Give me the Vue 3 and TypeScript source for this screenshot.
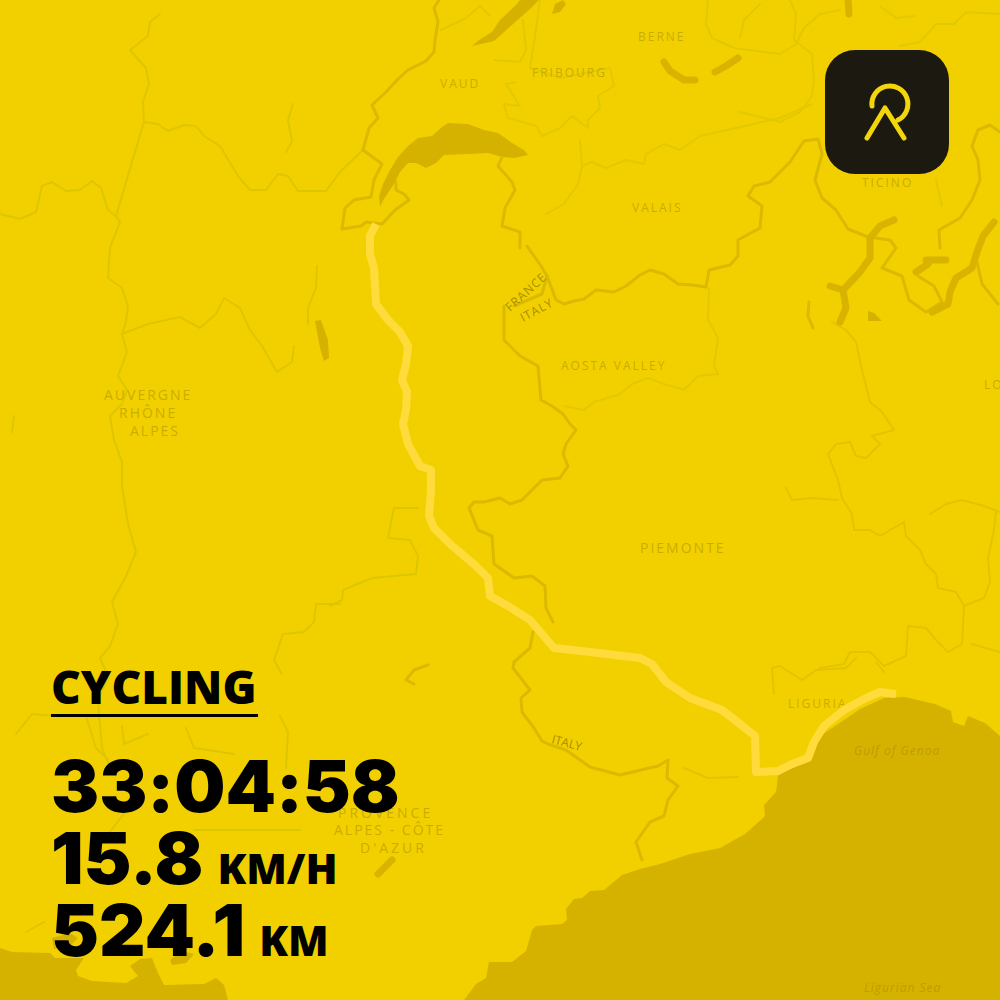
<script setup lang="ts">
interface PlaceLabel {
  text: string
  x: number
  y: number
  spacing: number
  size: number
  rotate?: number
  kind?: 'frontier' | 'sea'
}

interface Stat {
  name: string
  value: string
  unit?: string
}

const activity = 'Cycling'

const stats: Stat[] = [
  { name: 'Duration', value: '33:04:58' },
  { name: 'Average speed', value: '15.8', unit: 'km/h' },
  { name: 'Distance', value: '524.1', unit: 'km' },
]

const labels: PlaceLabel[] = [
  { text: 'BERNE', x: 638, y: 41, spacing: 2, size: 12 },
  { text: 'VAUD', x: 440, y: 88, spacing: 2, size: 12 },
  { text: 'FRIBOURG', x: 532, y: 77, spacing: 2, size: 12 },
  { text: 'VALAIS', x: 632, y: 212, spacing: 2, size: 12 },
  { text: 'TICINO', x: 862, y: 187, spacing: 2, size: 12 },
  { text: 'AOSTA VALLEY', x: 561, y: 370, spacing: 2, size: 12 },
  { text: 'AUVERGNE', x: 104, y: 400, spacing: 2, size: 14 },
  { text: 'RHÔNE', x: 119, y: 418, spacing: 2, size: 14 },
  { text: 'ALPES', x: 130, y: 436, spacing: 2, size: 14 },
  { text: 'PIEMONTE', x: 640, y: 553, spacing: 2, size: 14 },
  { text: 'LO', x: 984, y: 389, spacing: 2, size: 12 },
  { text: 'LIGURIA', x: 788, y: 708, spacing: 2, size: 12 },
  { text: 'PROVENCE', x: 338, y: 818, spacing: 3, size: 14 },
  { text: 'ALPES - CÔTE', x: 334, y: 835, spacing: 2, size: 14 },
  { text: "D'AZUR", x: 360, y: 853, spacing: 3, size: 14 },
  { text: 'FRANCE', x: 510, y: 312, spacing: 1, size: 12, rotate: -42, kind: 'frontier' },
  { text: 'ITALY', x: 523, y: 322, spacing: 1, size: 12, rotate: -28, kind: 'frontier' },
  { text: 'ITALY', x: 551, y: 743, spacing: 0, size: 12, rotate: 15, kind: 'frontier' },
  { text: 'Gulf of Genoa', x: 854, y: 755, spacing: 1, size: 12, kind: 'sea' },
  { text: 'Ligurian Sea', x: 864, y: 992, spacing: 1, size: 12, kind: 'sea' },
]

const water: string[] = [
  // Ligurian Sea
  'M486 1000 L464 1000 L476 984 L486 978 L489 962 L512 962 L526 951 L532 930 L536 926 L562 924 L567 920 L566 909 L574 899 L582 898 L590 891 L604 890 L622 875 L640 869 L660 864 L690 854 L720 848 L745 834 L765 816 L764 805 L776 792 L778 776 L788 770 L812 759 L820 736 L838 724 L860 709 L884 698 L905 697 L935 704 L951 711 L953 722 L964 726 L968 716 L985 723 L1000 736 L1000 1000 Z',
  // Gulf of Lion
  'M0 948 L12 952 L50 953 L55 958 L84 958 L76 970 L78 976 L92 981 L126 983 L138 976 L130 966 L140 959 L152 958 L158 973 L164 985 L204 984 L216 978 L224 985 L228 1000 L0 1000 Z',
  // Lake Geneva
  'M380 207 L379 196 L383 184 L390 170 L398 157 L408 146 L418 138 L432 136 L442 127 L448 123 L468 124 L484 130 L498 133 L512 143 L524 150 L528 155 L514 158 L502 157 L488 153 L470 154 L444 155 L436 163 L426 168 L416 163 L408 163 L400 172 L394 184 L384 199 Z',
  // Lake Neuchatel
  'M472 46 L479 40 L492 32 L500 20 L516 5 L520 0 L539 0 L530 9 L512 25 L494 41 Z',
  'M552 14 L555 4 L563 0 L566 4 L560 12 Z',
  'M52 938 L70 933 L78 938 L70 946 L54 949 Z',
  'M170 960 L182 951 L194 954 L186 963 L172 965 Z',
  'M315 321 L321 320 L328 340 L329 358 L324 361 L320 348 Z',
  'M868 311 L874 313 L882 321 L868 321 Z',
]

const lakes: string[] = [
  'M664 62 L670 71 L684 80 L695 80',
  'M715 72 L726 66 L738 58',
  'M894 220 L880 226 L870 238 L870 258 L860 272 L843 290 L830 286 M843 290 L846 308 L840 322',
  'M994 222 L983 236 L977 252 L972 268 L956 278 L950 292 L948 304 L932 312',
  'M848 0 L849 14',
  'M926 260 L946 260 M928 264 L916 272',
  'M392 860 L378 874',
]

const borders: string[] = [
  // France - Switzerland
  'M439 0 L434 8 L438 22 L435 40 L434 52 L426 61 L408 70 L398 79 L386 92 L372 105 L378 118 L369 128 L363 150 L382 164 L374 180 L371 197 L354 200 L345 208 L342 229 L361 226 L366 222 L382 224 L395 210 L409 200 L404 194 L396 190 L396 182',
  'M502 157 L498 166 L512 182 L515 190 L505 208 L502 226 L520 232 L520 248 M527 246 L541 266 L547 276 L542 294 L514 306',
  // Italy - Switzerland
  'M547 276 L556 300 L564 304 L574 301 L584 299 L596 290 L614 292 L626 286 L640 275 L650 270 L664 274 L678 284 L692 285 L706 287 L709 270 L730 265 L738 256 L738 240 L760 228 L762 206 L748 196 L754 186 L770 182 L790 162 L804 141 L818 139 L822 154 L815 180 L822 198 L836 210 L848 229 L868 237',
  'M868 237 L890 240 L896 248 L882 268 L902 276 L909 300 L926 312 L942 302 L934 286 L918 276 M940 248 L939 230 L960 218 L972 200 L980 180 L978 160 L972 146 L978 130 L990 125 L1000 132',
  // France - Italy
  'M504 306 L504 340 L520 356 L538 366 L541 400 L552 406 L563 414 L570 424 L576 430 L566 444 L563 454 L568 466 L560 478 L542 480 L532 490 L522 500 L510 504 L500 498 L484 502 L474 502 L469 508 L478 530 L492 536 L494 564 L514 578 L532 576 L545 586 L546 608 L553 622',
  'M533 632 L530 648 L514 662 L513 668 L530 690 L521 698 L522 712 L534 728 L542 741 L548 744 L566 750 L590 767 L620 775 L658 766 L668 760 L667 778 L678 786 L668 800 L664 816 L650 822 L636 842 L642 860',
  'M428 665 L414 670 L406 680 L414 684',
  'M977 262 L982 284 L998 304 M809 302 L808 316 L813 328',
]

const regions: string[] = [
  // Rhone and Saone departments
  'M160 14 L150 22 L148 36 L130 50 L146 68 L149 84 L143 102 L144 122 L132 162 L116 216 L120 222 L110 248 L108 278 L122 288 L128 306 L126 322 L122 334 L127 352 L118 376 L127 390 L122 404 L110 416 L114 440 L122 462 L122 486 L128 524 L136 552 L126 576 L112 602 L118 624 L110 646 L100 658 L108 676 L98 700 L102 748 L112 772',
  'M144 122 L158 124 L168 131 L184 125 L196 126 L204 136 L220 146 L238 176 L250 190 L266 190 L278 174 L288 176 L298 191 L326 191 L340 172 L363 150',
  'M293 104 L288 120 L292 142 L286 152 M317 266 L316 288 L308 308 L308 324',
  'M0 214 L20 219 L36 212 L42 186 L52 182 L66 191 L80 190 L92 181 L101 188 L108 210 L118 218',
  'M122 334 L148 324 L180 317 L200 328 L216 314 L224 298 L240 308 L250 330 L262 346 L277 372 L292 362 L294 346',
  'M340 604 L316 604 L314 622 L304 632 L283 634 L274 660 L282 674 M330 606 L342 600 L343 590 L372 578 L416 574 L418 556 L410 540 L388 538 L394 508 L418 508',
  'M16 734 L32 714 L54 716 M86 716 L96 748 L108 760 M122 726 L124 744 L148 734 M186 728 L194 748 L234 754 M280 716 L288 732 L286 768 M108 834 L124 814 L140 800 M194 830 L300 830 M26 932 L44 922',
  'M12 432 L14 416',
]

const cantons: string[] = [
  'M441 30 L466 18 L480 6 L490 16 M523 20 L526 50 L520 62 L494 60 M540 0 L536 30 L530 68 L560 78 L610 68 L614 86 L598 96 L600 108 L588 120 L588 128 L572 116 L560 128 L542 136 L536 126 L508 118 L504 104 L520 106 L506 84 L516 82',
  'M580 140 L582 166 L592 162 L606 168 L626 160 L644 164 L646 154 L664 144 L680 150 L700 136 L718 132 L780 118 L812 104 M582 166 L578 184 L564 204 L546 214',
  'M708 0 L706 24 L712 38 L734 48 L780 54 L796 44 L804 28 L820 14 L840 10 M760 4 L744 20 L740 38 M790 0 L796 14 L794 40 L812 54 L814 80 L812 96 L800 112 L780 122 L740 112',
  'M900 46 L920 42 L936 24 L954 24 L966 12 L1000 14 M880 6 L896 18 L914 16 M936 180 L942 206',
  'M709 288 L708 320 L718 338 L714 366 L718 374 L698 376 L684 390 L664 384 L648 378 L632 384 L620 394 L594 402 L584 410 L564 406',
]

const provinces: string[] = [
  'M832 322 L846 330 L856 342 L862 370 L870 402 L882 412 L894 430 L872 436 L880 444 L866 458 L856 456 L850 442 L836 444 L828 454 L838 480 L842 498 L852 514 L854 530 L870 530 L880 536 L904 522 L906 536 L920 550 L926 564 L936 574 L938 588 L956 592 L964 606 L984 598 L990 582 L988 558 L994 530 L996 512',
  'M786 488 L792 500 L812 498 L838 500 M930 514 L946 504 L962 500 L984 506 L1000 512 M964 606 L962 644 L948 652 L936 640 L926 628 L908 626 L906 656 L884 666 L870 652 L850 652 L844 664 L820 668',
  'M774 694 L772 668 L780 666 L802 680 L816 670 L846 668 L856 658 M684 768 L708 778 L738 777 M876 662 L884 672 M972 644 L1000 652',
]

const route =
  'M376 224 L370 236 L370 254 L374 268 L376 304 L388 320 L400 332 L408 346 L406 364 L402 380 L407 392 L406 410 L403 424 L408 444 L420 466 L431 470 L431 490 L429 516 L434 528 L450 544 L476 566 L488 578 L490 596 L508 606 L530 620 L542 634 L554 648 L590 652 L640 658 L652 664 L666 682 L690 698 L722 710 L740 724 L755 736 L756 772 L778 771 L792 764 L808 758 L814 742 L824 726 L844 710 L866 698 L880 692 L896 694'
</script>

<template>
  <main class="card">
    <svg class="map" viewBox="0 0 1000 1000" preserveAspectRatio="xMidYMid slice" aria-hidden="true">
      <g class="water"><path v-for="d in water" :key="d" :d="d" /></g>
      <g class="line province"><path v-for="d in provinces" :key="d" :d="d" /></g>
      <g class="line canton"><path v-for="d in cantons" :key="d" :d="d" /></g>
      <g class="line region"><path v-for="d in regions" :key="d" :d="d" /></g>
      <g class="line border"><path v-for="d in borders" :key="d" :d="d" /></g>
      <g class="line lake"><path v-for="d in lakes" :key="d" :d="d" /></g>
      <text
        v-for="label in labels"
        :key="label.text + label.y"
        class="place"
        :class="label.kind"
        :font-size="label.size"
        :letter-spacing="label.spacing"
        :transform="`translate(${label.x} ${label.y}) rotate(${label.rotate ?? 0})`"
      >{{ label.text }}</text>
      <path class="route" :d="route" />
    </svg>

    <div class="badge" role="img" aria-label="App logo">
      <svg viewBox="0 0 124 124" aria-hidden="true">
        <path d="M47 56 A18 18 0 1 1 73 70 M42 88 L60 58 L79 88" />
      </svg>
    </div>

    <section class="summary">
      <h1 class="activity">{{ activity }}</h1>
      <ul class="stats">
        <li v-for="stat in stats" :key="stat.name">
          <span class="value">{{ stat.value }}</span>
          <span v-if="stat.unit" class="unit">{{ stat.unit }}</span>
        </li>
      </ul>
    </section>
  </main>
</template>

<style>
body {
  margin: 0;
  background: #f2d000;
}
</style>

<style scoped>
.card {
  position: relative;
  box-sizing: border-box;
  min-height: 100vh;
  padding: 50px 51px 34px;
  display: flex;
  flex-direction: column;
  justify-content: space-between;
  overflow: hidden;
  background: #f2d000;
  color: #000;
  font-family: "Open Sans", Lato, sans-serif;
}

.map {
  position: absolute;
  inset: 0;
  width: 100%;
  height: 100%;
}

.water {
  fill: #d5b200;
}

.line {
  fill: none;
  stroke-linejoin: round;
  stroke-linecap: round;
}

.province {
  stroke: #e3c300;
  stroke-width: 2;
}

.canton {
  stroke: #e3c800;
  stroke-width: 2;
}

.region {
  stroke: #dfc500;
  stroke-width: 2;
}

.border {
  stroke: #dbb900;
  stroke-width: 3;
}

.lake {
  stroke: #d8b400;
  stroke-width: 7;
}

.place {
  fill: #cbac00;
  font-family: "Open Sans", sans-serif;
}

.place.frontier {
  fill: #a88e00;
}

.place.sea {
  fill: #bd9d00;
  font-style: italic;
}

.route {
  fill: none;
  stroke: #ffdb3c;
  stroke-width: 8;
  stroke-linejoin: round;
}

.badge {
  position: relative;
  align-self: flex-end;
  width: 124px;
  height: 124px;
  border-radius: 30px;
  background: #1c1a10;
}

.badge svg {
  display: block;
  width: 100%;
  height: 100%;
  fill: none;
  stroke: #f2d60a;
  stroke-width: 5;
  stroke-linecap: round;
  stroke-linejoin: round;
}

.summary {
  position: relative;
  display: flex;
  flex-direction: column;
  align-items: flex-start;
  gap: 33px;
}

.activity {
  margin: 0;
  padding: 0 2px 2px 0;
  border-bottom: 3px solid #000;
  font-size: 46px;
  font-weight: 800;
  line-height: 52px;
  text-transform: uppercase;
}

.stats {
  margin: 0;
  padding: 0;
  list-style: none;
}

.stats li {
  display: flex;
  align-items: baseline;
  gap: 14px;
  height: 72px;
  font-weight: 900;
  line-height: 72px;
}

.value {
  font-family: Inter, "Open Sans", sans-serif;
  font-size: 72px;
  font-variant-ligatures: no-contextual;
}

.unit {
  font-size: 42px;
  text-transform: uppercase;
}
</style>
